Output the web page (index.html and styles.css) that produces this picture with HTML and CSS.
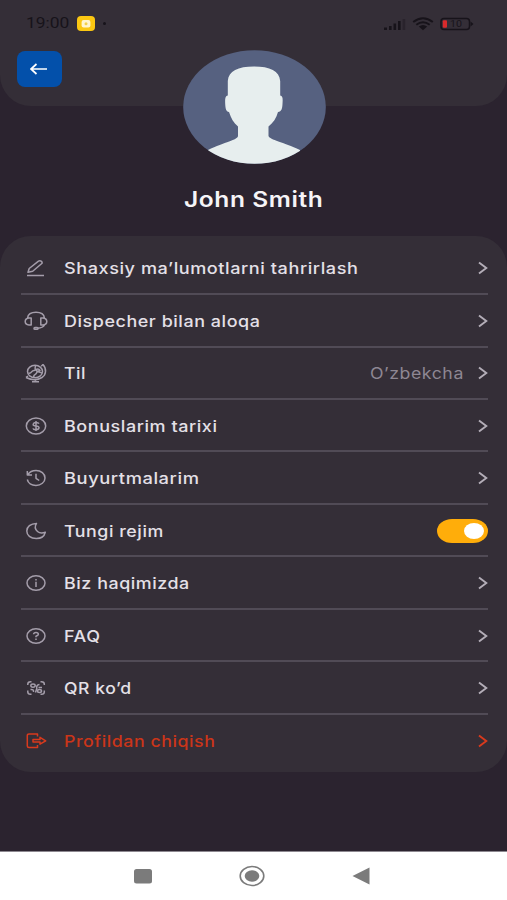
FILE: index.html
```html
<!DOCTYPE html>
<html lang="uz">
<head>
<meta charset="utf-8">
<title>Profil</title>
<link rel="stylesheet" href="styles.css">
</head>
<body>
<div class="screen">
  <header class="top">
    <div class="status">
      <span class="time"><span class="fit" data-w="43">19:00</span></span>
      <svg class="rec" viewBox="0 0 18 15"><rect width="18" height="15" rx="4" fill="#fbc712"/><rect x="4.6" y="4" width="8.8" height="7.5" rx="2" fill="#fff5cf"/><circle cx="9" cy="7.7" r="1.5" fill="#f2cf4c"/></svg>
      <span class="dot"></span>
      <svg class="signal" viewBox="0 0 24 14"><g fill="#17131a"><rect x="1" y="10.5" width="3" height="2.5"/><rect x="6" y="9" width="2.6" height="4"/><rect x="10.5" y="6.5" width="2.6" height="6.5"/><rect x="15" y="4" width="2.6" height="9"/></g><rect x="19.6" y="2" width="2.6" height="11" fill="#29232c"/></svg>
      <svg class="wifi" viewBox="0 0 22 14"><g fill="none" stroke="#17131a" stroke-width="2"><path d="M1.2 5Q11-2.6 20.8 5"/><path d="M4.3 7.8Q11 2.6 17.7 7.8"/></g><path d="M6.8 9.6Q11 6.6 15.2 9.6L11 13.3Z" fill="#17131a"/></svg>
      <svg class="battery" viewBox="0 0 34 14"><rect x="1" y="1.4" width="28.5" height="11.2" rx="3" fill="none" stroke="#17131a" stroke-width="1.5"/><path d="M30.5 4.5L33.5 7L30.5 9.5Z" fill="#17131a"/><rect x="2.8" y="3.3" width="4.2" height="7.4" rx="1" fill="#d92a2c"/><text x="10" y="10.2" font-size="9" textLength="12" lengthAdjust="spacingAndGlyphs" fill="#17131a">10</text></svg>
    </div>
    <button class="back" aria-label="Orqaga"><svg viewBox="0 0 18 12"><path d="M1 6H17M6.5 1L1 6L6.5 11" fill="none" stroke="#fff" stroke-width="1.7"/></svg></button>
  </header>
  <svg class="avatar" viewBox="0 0 143 114">
    <defs><clipPath id="oval"><ellipse cx="71.5" cy="57" rx="71.3" ry="56.8"/></clipPath></defs>
    <g clip-path="url(#oval)"><rect width="143" height="114" fill="#566180"/>
    <path fill="#e7eeee" d="M44.800 45.500L44.800 31C45.500 21 55 16.600 71 16.600S96.500 21 97.200 31L97.200 45.500C100 46 99.800 49 99.500 54C99.200 59 98.500 61.500 95 62C93.500 68 90 73 85.500 76.500L85.500 86C87 90 100 92 117 100V114H25V100C42 92 54.500 90 55 86L55 76.500C50.500 73 48 68 46 62C43 61.500 42.500 59 42.200 54C42 49 42 46 44.800 45.500Z"/></g>
  </svg>
  <h1 class="name"><span class="fit mid" data-w="139">John Smith</span></h1>
  <main class="panel">
    <div class="row">
      <svg class="icon" viewBox="0 0 24 20"><path d="M3 17.500H20M4 14.300L5.200 10.500L14.500 3.200Q16 2.200 17.500 3.400Q18.800 4.700 17.500 5.800L8.700 13.300Z"/></svg>
      <span class="label"><span class="fit" data-w="294">Shaxsiy ma’lumotlarni tahrirlash</span></span>
      <svg class="chev" viewBox="0 0 10 14"><path d="M1 1.500L8.300 7L1 12.500"/></svg>
    </div>
    <div class="row">
      <svg class="icon" viewBox="0 0 24 20"><path d="M3.500 7C4 3.500 7.500 1.300 12 1.300S20 3.500 20.500 7M20.500 14C19.500 16 17 17 13.500 17.300M7.200 7H5Q1.200 7.500 1.200 10.500T5 14H7.200ZM16.800 7H19Q22.800 7.500 22.800 10.500T19 14H16.800Z"/><rect x="10" y="16.500" width="4" height="1.800" rx=".9"/></svg>
      <span class="label"><span class="fit" data-w="196">Dispecher bilan aloqa</span></span>
      <svg class="chev" viewBox="0 0 10 14"><path d="M1 1.500L8.300 7L1 12.500"/></svg>
    </div>
    <div class="row">
      <svg class="icon" viewBox="0 0 24 20"><ellipse cx="11" cy="8.500" rx="7.500" ry="6.200"/><path d="M4.500 10C8 11 7 7.500 10 7.500S9.500 4 12 3M10 14.500C8.500 11.500 12 12 12.500 10S15 9 18 10M12 6.500Q14.500 5 16 7.500L13 8.500ZM19 1.500C23 6 22 12 18 14.500S8 17.500 2 14.500M19 1.500L17.200 3.200M2 14.500L4 13.200M11.500 16.500V18.500M8 18.800H15"/></svg>
      <span class="label"><span class="fit" data-w="22">Til</span></span>
      <span class="value"><span class="fit end" data-w="94">O’zbekcha</span></span>
      <svg class="chev" viewBox="0 0 10 14"><path d="M1 1.500L8.300 7L1 12.500"/></svg>
    </div>
    <div class="row">
      <svg class="icon" viewBox="0 0 24 20"><ellipse cx="12" cy="10" rx="9.700" ry="8"/><path d="M15 7.700Q14.300 6.400 12 6.400T9.200 8.100T12 10T15 11.900T12 13.700T9 12.300M12 5V15"/></svg>
      <span class="label"><span class="fit" data-w="154">Bonuslarim tarixi</span></span>
      <svg class="chev" viewBox="0 0 10 14"><path d="M1 1.500L8.300 7L1 12.500"/></svg>
    </div>
    <div class="row">
      <svg class="icon" viewBox="0 0 24 20"><path d="M4 6.500C5.500 4 8.500 2.500 12 2.500C17 2.500 21 5.800 21 10S17 17.400 12 17.400C7.500 17.400 4 15 3.300 11.500M3.300 3V7H8M12 5.800V10.300L15.200 12.500"/></svg>
      <span class="label"><span class="fit" data-w="135">Buyurtmalarim</span></span>
      <svg class="chev" viewBox="0 0 10 14"><path d="M1 1.500L8.300 7L1 12.500"/></svg>
    </div>
    <div class="row">
      <svg class="icon" viewBox="0 0 24 20"><path d="M12.500 2.400C6.500 2.500 2.800 5.800 2.800 10S6.500 17.600 12.300 17.600C17 17.600 20.400 15 21.300 11.300C18 12.500 15.500 12.200 13.500 10.500C11 8.300 10.800 5 12.500 2.400Z"/></svg>
      <span class="label"><span class="fit" data-w="100">Tungi rejim</span></span>
      <span class="toggle"><span class="knob"></span></span>
    </div>
    <div class="row">
      <svg class="icon" viewBox="0 0 24 20"><ellipse cx="12" cy="10" rx="9" ry="7.300"/><path d="M12 8.800V14M12 6V7.400"/></svg>
      <span class="label"><span class="fit" data-w="126">Biz haqimizda</span></span>
      <svg class="chev" viewBox="0 0 10 14"><path d="M1 1.500L8.300 7L1 12.500"/></svg>
    </div>
    <div class="row">
      <svg class="icon" viewBox="0 0 24 20"><ellipse cx="12" cy="10" rx="9" ry="7.300"/><path d="M9.600 8.200Q9.700 6.400 12 6.400T14.400 8.200Q14.400 9.200 12 10.300V11.300M12 12.600V14"/></svg>
      <span class="label"><span class="fit" data-w="37">FAQ</span></span>
      <svg class="chev" viewBox="0 0 10 14"><path d="M1 1.500L8.300 7L1 12.500"/></svg>
    </div>
    <div class="row">
      <svg class="icon" viewBox="0 0 24 20"><path d="M3.800 7V6Q3.800 3.700 6.500 3.700H7.500M16.500 3.700H17.500Q20.300 3.700 20.300 6V7M3.800 12.500V14Q3.800 16.300 6.500 16.300H7.500M16.500 16.300H17.500Q20.300 16.300 20.300 14V12.500"/><ellipse cx="9" cy="7.600" rx="2.200" ry="1.700"/><ellipse cx="15.500" cy="13" rx="2" ry="1.500"/><path d="M15.500 6.500Q12 7 12.800 10.500L11.500 14.500M6.500 11.500Q10 11 9.500 14M14.500 9.500H18"/></svg>
      <span class="label"><span class="fit" data-w="68">QR ko’d</span></span>
      <svg class="chev" viewBox="0 0 10 14"><path d="M1 1.500L8.300 7L1 12.500"/></svg>
    </div>
    <div class="row exit">
      <svg class="icon" viewBox="0 0 24 20"><path d="M13.500 5.500V3H5Q3.300 3 3.300 4.500V15Q3.300 16.500 5 16.500H13.500V14M9 8.600H16V6.300L21.700 9.800L16 13.200V11H9Z"/></svg>
      <span class="label"><span class="fit" data-w="151">Profildan chiqish</span></span>
      <svg class="chev" viewBox="0 0 10 14"><path d="M1 1.500L8.300 7L1 12.500"/></svg>
    </div>
  </main>
  <nav class="nav">
    <svg viewBox="0 0 20 16"><rect x="1" y="1" width="18" height="14.500" rx="2.500" fill="#7b7b7b"/></svg>
    <svg class="home" viewBox="0 0 26 22"><ellipse cx="13" cy="11" rx="11.800" ry="9.500" fill="none" stroke="#7b7b7b" stroke-width="1.600"/><ellipse cx="13" cy="11" rx="7.300" ry="5.800" fill="#7b7b7b"/></svg>
    <svg viewBox="0 0 20 18"><path d="M1.500 9L18.500 .5V17.500Z" fill="#7b7b7b"/></svg>
  </nav>
</div>
<script src="fit.js"></script>
</body>
</html>
```
FILE: styles.css
```css
* { box-sizing: border-box; }
body { margin: 0; background: #2b232f; font-family: Inter, sans-serif; }
.screen { width: 507px; height: 900px; display: flex; flex-direction: column; overflow: hidden; background: #2b232f; }
.top { height: 106px; flex: none; background: #342e37; border-radius: 0 0 31px 31px; padding: 15px 0 0 16.500px; }
.status { display: flex; align-items: center; height: 17px; padding-left: 9.500px; }
.time { width: 51px; color: #17131a; font: 400 15px/17px Roboto, sans-serif; }
.rec { width: 18px; height: 15px; }
.dot { width: 3px; height: 3px; margin-left: 8px; border-radius: 50%; background: #17131a; }
.signal { width: 24px; height: 14px; margin-left: 277px; }
.wifi { width: 22px; height: 14px; margin-left: 5px; }
.battery { width: 34px; height: 14px; margin-left: 6px; font-family: Roboto, sans-serif; }
.back { display: flex; align-items: center; justify-content: center; width: 45px; height: 36px; margin-top: 19px; padding: 0; border: 0; border-radius: 8px; background: #0350aa; }
.back svg { width: 18px; height: 12px; }
.avatar { width: 143px; height: 114px; margin: -56px 0 0 182.500px; flex: none; }
.name { margin: 20px 0 0; height: 30px; text-align: center; color: #f6f4f7; font: 600 21px/31px Inter, sans-serif; letter-spacing: .5px; }
.fit { display: inline-block; white-space: nowrap; transform-origin: left center; }
.mid { transform-origin: center; }
.end { transform-origin: right center; }
.panel { height: 536.500px; flex: none; margin-top: 21.500px; padding: 7.100px 19.500px 0 21px; background: #342e37; border-radius: 31px; }
.row { display: flex; align-items: center; height: 52.480px; padding: 1px 0 0 3px; border-bottom: 2px solid #514b56; }
.row:last-child { border-bottom: 0; padding-bottom: 2px; }
.icon { width: 24px; height: 20px; flex: none; fill: none; stroke: #a49daa; stroke-width: 1.500; stroke-linejoin: round; }
.label { flex: 1; margin-left: 16px; color: #e4e0e7; font-size: 16px; font-weight: 450; line-height: 24px; letter-spacing: .5px; }
.value { margin-right: 14px; color: #8e8793; font-size: 16px; line-height: 24px; letter-spacing: .5px; }
.chev { width: 10px; height: 14px; flex: none; fill: none; stroke: #b4aeb8; stroke-width: 1.900; }
.exit .icon, .exit .chev { stroke: #d93a1d; }
.exit .label { color: #cb3519; }
.toggle { display: flex; align-items: center; justify-content: flex-end; width: 51px; height: 24px; padding-right: 4px; border-radius: 15px / 12px; background: #ffad0a; }
.knob { width: 20px; height: 16px; border-radius: 50%; background: #fff; }
.nav { display: flex; justify-content: space-between; align-items: center; height: 49px; margin-top: auto; padding: 0 136px 0 133px; background: #fff; border-top: 1px solid #8d8890; }
.nav svg { width: 20px; height: 18px; }
.nav .home { width: 26px; height: 22px; }
```
FILE: fit.js
```js
// Stretch every label to its set width, keeping its height.
document.querySelectorAll(".fit").forEach(function (el) {
  el.style.transform = "scaleX(" + el.dataset.w / el.offsetWidth + ")";
});
```
